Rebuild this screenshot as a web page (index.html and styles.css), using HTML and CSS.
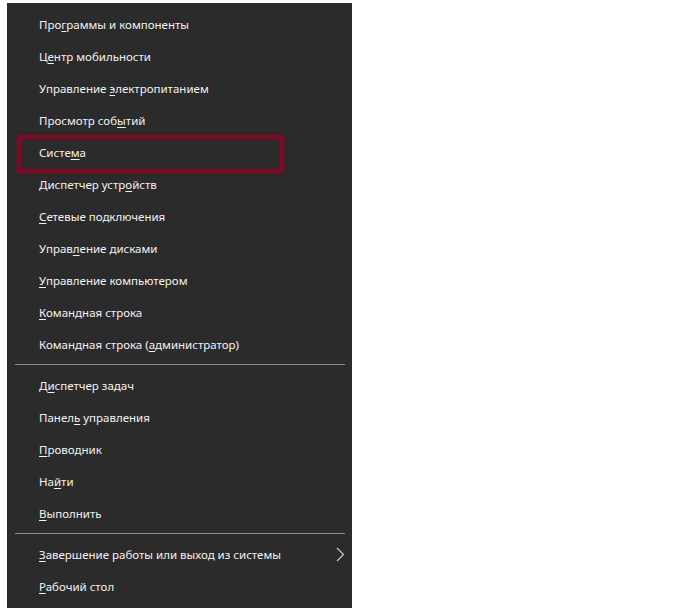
FILE: index.html
```html
<!DOCTYPE html>
<html lang="ru">
<head>
    <meta charset="UTF-8">
    <title>Меню</title>
    <link rel="stylesheet" href="styles.css">
</head>
<body>

<div class="menu">
    <div class="item"><span>Про<u>г</u>раммы и компоненты</span></div>
    <div class="item"><span>Ц<u>е</u>нтр мобильности</span></div>
    <div class="item"><span>Управление <u>э</u>лектропитанием</span></div>
    <div class="item"><span>Просмотр соб<u>ы</u>тий</span></div>
    <div class="item selected"><span>Систе<u>м</u>а</span></div>
    <div class="item"><span>Диспетчер устр<u>о</u>йств</span></div>
    <div class="item"><span><u>С</u>етевые подключения</span></div>
    <div class="item"><span>Управ<u>л</u>ение дисками</span></div>
    <div class="item"><span><u>У</u>правление компьютером</span></div>
    <div class="item"><span><u>К</u>омандная строка</span></div>
    <div class="item"><span>Командная строка (<u>а</u>дминистратор)</span></div>

    <div class="separator"></div>

    <div class="item"><span>Д<u>и</u>спетчер задач</span></div>
    <div class="item"><span>Панел<u>ь</u> управления</span></div>
    <div class="item"><span><u>П</u>роводник</span></div>
    <div class="item"><span>На<u>й</u>ти</span></div>
    <div class="item"><span><u>В</u>ыполнить</span></div>

    <div class="separator"></div>

    <div class="item">
        <span><u>З</u>авершение работы или выход из системы</span>
        <svg class="chevron" width="9" height="15" viewBox="0 0 9 15">
            <path d="M1 1 L7.5 7.5 L1 14" fill="none" stroke="#c8c8c8" stroke-width="1.2"/>
        </svg>
    </div>
    <div class="item"><span><u>Р</u>абочий стол</span></div>
</div>

</body>
</html>
```

FILE: styles.css
```css
body {
    margin: 0;
    background-color: #ffffff;
    font-family: 'Noto Sans', 'Open Sans', sans-serif;
}
.menu {
    margin: 3px 0 0 7px;
    width: 345px;
    height: 605px;
    box-sizing: border-box;
    padding-top: 5px;
    background-color: #2b2b2b;
}
.item {
    display: flex;
    align-items: center;
    justify-content: space-between;
    height: 32px;
    padding: 0 7px 0 32px;
    font-size: 11.5px;
    color: #f2f2f2;
}
.item u {
    text-underline-offset: 2px;
}
.selected {
    position: relative;
}
.selected::after {
    content: '';
    position: absolute;
    left: 10px;
    top: -1px;
    width: 259px;
    height: 30px;
    border: 4px solid #7d0b25;
    box-shadow: 0 0 2px #7d0b25, inset 0 0 2px #7d0b25;
}
.separator {
    height: 1px;
    margin: 4px 7px 4px 8px;
    background-color: #8c8c8c;
}
.chevron {
    display: block;
}
```
